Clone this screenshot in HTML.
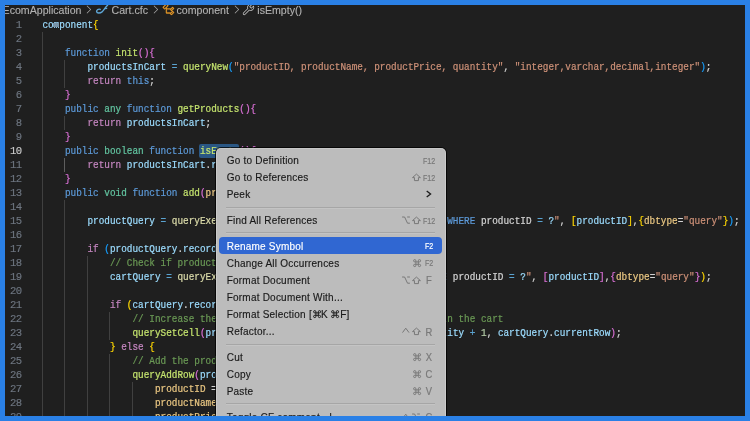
<!DOCTYPE html>
<html><head><meta charset="utf-8">
<style>
html,body{margin:0;padding:0;}
body{width:750px;height:421px;overflow:hidden;background:#2a80e6;position:relative;}
#ed{position:absolute;left:5px;top:5px;width:740px;height:411px;background:#1f1f1f;overflow:hidden;}
#code{position:absolute;left:-5px;top:-5px;width:750px;height:421px;will-change:transform;}
.ln{position:absolute;left:42.5px;height:14px;line-height:14px;white-space:pre;font-family:"Liberation Mono",monospace;font-size:9.35px;letter-spacing:0.0135px;-webkit-text-stroke:0.2px;transform:scaleY(1.12);transform-origin:0 9.6px;margin-top:1.2px;}
.num{position:absolute;left:0;width:21.4px;text-align:right;height:14px;line-height:14px;font-family:"Liberation Mono",monospace;font-size:10.6px;letter-spacing:-0.6px;margin-top:-0.4px;color:#6e7681;-webkit-text-stroke:0.15px;}
.num.act{color:#cccccc;}
.guide{position:absolute;width:1px;background:#404040;}
.guide.act{background:#5e5e5e;}
#bc{position:absolute;left:-5px;top:-5px;width:750px;height:23px;will-change:transform;font-family:"Liberation Sans",sans-serif;font-size:10.6px;color:#b2b2b2;-webkit-text-stroke:0.12px;}
#bc span{position:absolute;top:3.5px;line-height:13px;white-space:pre;}
#bc svg{position:absolute;}
#hl{position:absolute;left:199.4px;top:143.9px;width:39.3px;height:14px;background:#2a5784;border-radius:2px;}
#menu{position:absolute;left:215.7px;top:148.2px;width:230px;height:300px;background:#bcbcbc;border-radius:5px;box-shadow:0 0 0 1px rgba(0,0,0,0.75),inset 0 0 0 0.6px rgba(255,255,255,0.35);font-family:"Liberation Sans",sans-serif;font-size:10px;letter-spacing:0.22px;color:#1a1a1a;}
.mi{position:absolute;left:11px;height:14px;line-height:14px;white-space:pre;-webkit-text-stroke:0.15px;}
.sc{position:absolute;left:0;top:0;}
.sep{position:absolute;left:10.5px;width:208.5px;height:1px;background:#a6a6a6;box-shadow:0 1px 0 rgba(255,255,255,0.12);}
#sel{position:absolute;left:3.5px;width:222.6px;top:89px;height:16.8px;background:#3067d2;border-radius:4px;}
.k{position:absolute;font-size:9.3px;letter-spacing:0px;line-height:10px;height:10px;width:20px;text-align:center;color:#787878;-webkit-text-stroke:0.2px;}
</style></head><body>
<div id="ed">
<div id="code">
<div id="hl"></div>
<div class="guide" style="left:42.00px;top:32px;height:392px"></div>
<div class="guide" style="left:64.00px;top:60px;height:28px"></div>
<div class="guide" style="left:64.00px;top:116px;height:14px"></div>
<div class="guide act" style="left:64.00px;top:158px;height:14px"></div>
<div class="guide" style="left:64.00px;top:200px;height:224px"></div>
<div class="guide" style="left:87.00px;top:256px;height:168px"></div>
<div class="guide" style="left:109.00px;top:312px;height:28px"></div>
<div class="guide" style="left:109.00px;top:354px;height:70px"></div>
<div class="guide" style="left:132.00px;top:382px;height:42px"></div>
<div class="ln" style="top:18px"><span style="color:#9cdcfe">component</span><span style="color:#ffd700">{</span></div>
<div class="num" style="top:18px">1</div>
<div class="ln" style="top:32px"></div>
<div class="num" style="top:32px">2</div>
<div class="ln" style="top:46px"><span style="color:#d4d4d4">    </span><span style="color:#5d9ad9">function</span><span style="color:#d4d4d4"> </span><span style="color:#c4e36e">init</span><span style="color:#da70d6">()</span><span style="color:#da70d6">{</span></div>
<div class="num" style="top:46px">3</div>
<div class="ln" style="top:60px"><span style="color:#d4d4d4">        </span><span style="color:#9cdcfe">productsInCart</span><span style="color:#d4d4d4"> </span><span style="color:#5ba3d0">=</span><span style="color:#d4d4d4"> </span><span style="color:#c4e36e">queryNew</span><span style="color:#179fff">(</span><span style="color:#ce9178">&quot;productID, productName, productPrice, quantity&quot;</span><span style="color:#d4d4d4">, </span><span style="color:#ce9178">&quot;integer,varchar,decimal,integer&quot;</span><span style="color:#179fff">)</span><span style="color:#d4d4d4">;</span></div>
<div class="num" style="top:60px">4</div>
<div class="ln" style="top:74px"><span style="color:#d4d4d4">        </span><span style="color:#c586c0">return</span><span style="color:#d4d4d4"> </span><span style="color:#5d9ad9">this</span><span style="color:#d4d4d4">;</span></div>
<div class="num" style="top:74px">5</div>
<div class="ln" style="top:88px"><span style="color:#d4d4d4">    </span><span style="color:#da70d6">}</span></div>
<div class="num" style="top:88px">6</div>
<div class="ln" style="top:102px"><span style="color:#d4d4d4">    </span><span style="color:#5d9ad9">public</span><span style="color:#d4d4d4"> </span><span style="color:#62c4a0">any</span><span style="color:#d4d4d4"> </span><span style="color:#5d9ad9">function</span><span style="color:#d4d4d4"> </span><span style="color:#c4e36e">getProducts</span><span style="color:#da70d6">()</span><span style="color:#da70d6">{</span></div>
<div class="num" style="top:102px">7</div>
<div class="ln" style="top:116px"><span style="color:#d4d4d4">        </span><span style="color:#c586c0">return</span><span style="color:#d4d4d4"> </span><span style="color:#9cdcfe">productsInCart</span><span style="color:#d4d4d4">;</span></div>
<div class="num" style="top:116px">8</div>
<div class="ln" style="top:130px"><span style="color:#d4d4d4">    </span><span style="color:#da70d6">}</span></div>
<div class="num" style="top:130px">9</div>
<div class="ln" style="top:144px"><span style="color:#d4d4d4">    </span><span style="color:#5d9ad9">public</span><span style="color:#d4d4d4"> </span><span style="color:#62c4a0">boolean</span><span style="color:#d4d4d4"> </span><span style="color:#5d9ad9">function</span><span style="color:#d4d4d4"> </span><span style="color:#c4e36e">isEmpty</span><span style="color:#da70d6">()</span><span style="color:#da70d6">{</span></div>
<div class="num act" style="top:144px">10</div>
<div class="ln" style="top:158px"><span style="color:#d4d4d4">        </span><span style="color:#c586c0">return</span><span style="color:#d4d4d4"> </span><span style="color:#9cdcfe">productsInCart</span><span style="color:#d4d4d4">.</span><span style="color:#9cdcfe">recordCount</span><span style="color:#d4d4d4"> </span><span style="color:#5ba3d0">==</span><span style="color:#d4d4d4"> </span><span style="color:#b5cea8">0</span><span style="color:#d4d4d4">;</span></div>
<div class="num" style="top:158px">11</div>
<div class="ln" style="top:172px"><span style="color:#d4d4d4">    </span><span style="color:#da70d6">}</span></div>
<div class="num" style="top:172px">12</div>
<div class="ln" style="top:186px"><span style="color:#d4d4d4">    </span><span style="color:#5d9ad9">public</span><span style="color:#d4d4d4"> </span><span style="color:#62c4a0">void</span><span style="color:#d4d4d4"> </span><span style="color:#5d9ad9">function</span><span style="color:#d4d4d4"> </span><span style="color:#c4e36e">add</span><span style="color:#da70d6">(</span><span style="color:#ebc883">productID</span><span style="color:#da70d6">)</span><span style="color:#da70d6">{</span></div>
<div class="num" style="top:186px">13</div>
<div class="ln" style="top:200px"></div>
<div class="num" style="top:200px">14</div>
<div class="ln" style="top:214px"><span style="color:#d4d4d4">        </span><span style="color:#9cdcfe">productQuery</span><span style="color:#d4d4d4"> </span><span style="color:#5ba3d0">=</span><span style="color:#d4d4d4"> </span><span style="color:#dcdcaa">queryExecute</span><span style="color:#179fff">(</span><span style="color:#ce9178">&quot;SELECT * FROM productsTable AS pro </span><span style="color:#5d9ad9">WHERE</span><span style="color:#d4d4d4"> productID </span><span style="color:#5ba3d0">=</span><span style="color:#d4d4d4"> </span><span style="color:#9cdcfe">?</span><span style="color:#ce9178">&quot;</span><span style="color:#d4d4d4">, </span><span style="color:#ffd700">[</span><span style="color:#9cdcfe">productID</span><span style="color:#ffd700">]</span><span style="color:#d4d4d4">,</span><span style="color:#ffd700">{</span><span style="color:#ebc883">dbtype</span><span style="color:#d4d4d4">=</span><span style="color:#ce9178">&quot;query&quot;</span><span style="color:#ffd700">}</span><span style="color:#179fff">)</span><span style="color:#d4d4d4">;</span></div>
<div class="num" style="top:214px">15</div>
<div class="ln" style="top:228px"></div>
<div class="num" style="top:228px">16</div>
<div class="ln" style="top:242px"><span style="color:#d4d4d4">        </span><span style="color:#c586c0">if</span><span style="color:#d4d4d4"> </span><span style="color:#179fff">(</span><span style="color:#9cdcfe">productQuery</span><span style="color:#d4d4d4">.</span><span style="color:#9cdcfe">recordCount</span><span style="color:#179fff">)</span><span style="color:#d4d4d4"> </span><span style="color:#179fff">{</span></div>
<div class="num" style="top:242px">17</div>
<div class="ln" style="top:256px"><span style="color:#d4d4d4">            </span><span style="color:#6a9955">// Check if product already in cart</span></div>
<div class="num" style="top:256px">18</div>
<div class="ln" style="top:270px"><span style="color:#d4d4d4">            </span><span style="color:#9cdcfe">cartQuery</span><span style="color:#d4d4d4"> </span><span style="color:#5ba3d0">=</span><span style="color:#d4d4d4"> </span><span style="color:#dcdcaa">queryExecute</span><span style="color:#ffd700">(</span><span style="color:#ce9178">&quot;SELECT * FROM productsInCart </span><span style="color:#5d9ad9">WHERE</span><span style="color:#d4d4d4"> productID </span><span style="color:#5ba3d0">=</span><span style="color:#d4d4d4"> </span><span style="color:#9cdcfe">?</span><span style="color:#ce9178">&quot;</span><span style="color:#d4d4d4">, </span><span style="color:#da70d6">[</span><span style="color:#9cdcfe">productID</span><span style="color:#da70d6">]</span><span style="color:#d4d4d4">,</span><span style="color:#da70d6">{</span><span style="color:#ebc883">dbtype</span><span style="color:#d4d4d4">=</span><span style="color:#ce9178">&quot;query&quot;</span><span style="color:#da70d6">}</span><span style="color:#ffd700">)</span><span style="color:#d4d4d4">;</span></div>
<div class="num" style="top:270px">19</div>
<div class="ln" style="top:284px"></div>
<div class="num" style="top:284px">20</div>
<div class="ln" style="top:298px"><span style="color:#d4d4d4">            </span><span style="color:#c586c0">if</span><span style="color:#d4d4d4"> </span><span style="color:#ffd700">(</span><span style="color:#9cdcfe">cartQuery</span><span style="color:#d4d4d4">.</span><span style="color:#9cdcfe">recordCount</span><span style="color:#ffd700">)</span><span style="color:#d4d4d4"> </span><span style="color:#ffd700">{</span></div>
<div class="num" style="top:298px">21</div>
<div class="ln" style="top:312px"><span style="color:#d4d4d4">                </span><span style="color:#6a9955">// Increase the quantity of the product if it is found in the cart</span></div>
<div class="num" style="top:312px">22</div>
<div class="ln" style="top:326px"><span style="color:#d4d4d4">                </span><span style="color:#c4e36e">querySetCell</span><span style="color:#da70d6">(</span><span style="color:#9cdcfe">productsInCart</span><span style="color:#d4d4d4">, </span><span style="color:#ce9178">&quot;quantity&quot;</span><span style="color:#d4d4d4">, </span><span style="color:#9cdcfe">cartQuery</span><span style="color:#d4d4d4">.</span><span style="color:#9cdcfe">quantity</span><span style="color:#d4d4d4"> </span><span style="color:#5ba3d0">+</span><span style="color:#d4d4d4"> </span><span style="color:#b5cea8">1</span><span style="color:#d4d4d4">, </span><span style="color:#9cdcfe">cartQuery</span><span style="color:#d4d4d4">.</span><span style="color:#9cdcfe">currentRow</span><span style="color:#da70d6">)</span><span style="color:#d4d4d4">;</span></div>
<div class="num" style="top:326px">23</div>
<div class="ln" style="top:340px"><span style="color:#d4d4d4">            </span><span style="color:#ffd700">}</span><span style="color:#d4d4d4"> </span><span style="color:#c586c0">else</span><span style="color:#d4d4d4"> </span><span style="color:#ffd700">{</span></div>
<div class="num" style="top:340px">24</div>
<div class="ln" style="top:354px"><span style="color:#d4d4d4">                </span><span style="color:#6a9955">// Add the product to the cart</span></div>
<div class="num" style="top:354px">25</div>
<div class="ln" style="top:368px"><span style="color:#d4d4d4">                </span><span style="color:#c4e36e">queryAddRow</span><span style="color:#da70d6">(</span><span style="color:#9cdcfe">productsInCart</span><span style="color:#d4d4d4">, </span><span style="color:#179fff">{</span></div>
<div class="num" style="top:368px">26</div>
<div class="ln" style="top:382px"><span style="color:#d4d4d4">                    </span><span style="color:#ebc883">productID</span><span style="color:#d4d4d4"> = </span><span style="color:#9cdcfe">productID</span><span style="color:#d4d4d4">,</span></div>
<div class="num" style="top:382px">27</div>
<div class="ln" style="top:396px"><span style="color:#d4d4d4">                    </span><span style="color:#ebc883">productName</span><span style="color:#d4d4d4"> = </span><span style="color:#9cdcfe">productQuery</span><span style="color:#d4d4d4">.</span><span style="color:#9cdcfe">productName</span><span style="color:#d4d4d4">,</span></div>
<div class="num" style="top:396px">28</div>
<div class="ln" style="top:410px"><span style="color:#d4d4d4">                    </span><span style="color:#ebc883">productPrice</span><span style="color:#d4d4d4"> = </span><span style="color:#9cdcfe">productQuery</span><span style="color:#d4d4d4">.</span><span style="color:#9cdcfe">productPrice</span><span style="color:#d4d4d4">,</span></div>
<div class="num" style="top:410px">29</div>
<div style="position:absolute;left:53.4px;top:22.6px;width:5.6px;height:4.9px;background:#7793a8"></div>
</div>
<div id="bc">
<span style="left:2.6px">EcomApplication</span>
<svg style="left:81.8px;top:3.1px" width="13" height="13" viewBox="0 0 300 300"><path fill="#a8a8a8" d="M189 150 107 69 119 57 206 145V156L119 244L107 232Z"/></svg>
<svg style="left:94px;top:3px" width="16" height="13" viewBox="94 3 16 13"><path fill="none" stroke="#5ea6d6" stroke-width="1.4" stroke-linecap="round" d="M100.2,9.4 C98.6,8.7 96.4,9.8 96.6,11.6 C96.9,13.5 100.2,13.4 102,11.9 C103.8,10.3 105.2,7.2 107.6,5.2"/><path fill="none" stroke="#5ea6d6" stroke-width="1.2" d="M104.3,8.7 L107.2,8.4"/></svg>
<span style="left:111.5px">Cart.cfc</span>
<svg style="left:149.4px;top:3.1px" width="13" height="13" viewBox="0 0 300 300"><path fill="#a8a8a8" d="M189 150 107 69 119 57 206 145V156L119 244L107 232Z"/></svg>
<svg style="left:161.6px;top:2.8px" width="13" height="13" viewBox="0 0 300 300"><path fill="#ee9d28" stroke="#ee9d28" stroke-width="8" d="M213 182H226L276 132V119L251 94H238L204 128H110V104L145 70V56L107 19H94L19 94V107L56 145H70L91 123V232L100 241H188V251L212 276H226L276 226V212L251 187H238L203 222H109V147H188V156ZM244 114 256 125 219 163 207 151ZM244 207 256 219 219 257 207 245ZM63 125 39 100 100 39 125 63Z"/></svg>
<span style="left:176.5px">component</span>
<svg style="left:229.8px;top:3.1px" width="13" height="13" viewBox="0 0 300 300"><path fill="#a8a8a8" d="M189 150 107 69 119 57 206 145V156L119 244L107 232Z"/></svg>
<svg style="left:242px;top:2.8px" width="13" height="13" viewBox="0 0 300 300"><path fill="#c8c8c8" d="M53 281Q39 281 29.5 271.5Q20 262 19.0 249.5Q18 237 26 227Q61 189 125 127Q120 113 120.0 98.0Q120 83 126 69Q136 45 157 32Q174 21 194.5 19.0Q215 17 233 25L245 30L191 86L214 109L270 55L275 67Q281 82 281.0 98.0Q281 114 275.0 129.0Q269 144 258 155Q252 161 244 166Q228 177 209.5 179.0Q191 181 173 174Q105 243 73 273Q64 281 53 281ZM201 36Q183 36 167 47Q161 50 156 55Q142 69 138.5 88.0Q135 107 143 125L146 131L142 135Q74 201 39 238Q36 243 36.5 248.5Q37 254 40.5 257.5Q44 261 47.0 262.0Q50 263 54.0 263.0Q58 263 61 260Q91 233 164 158L169 154L174 156Q189 163 205.0 161.5Q221 160 235 151Q241 148 246 143Q255 134 259.5 122.5Q264 111 264 98Q264 92 263 86L214 134L166 86L214 37Q208 36 201 36Z"/></svg>
<span style="left:257.3px">isEmpty()</span>
</div>
</div>
<div id="menu">
<div id="sel"></div>
<div class="sep" style="top:58.60px"></div>
<div class="sep" style="top:84.25px"></div>
<div class="sep" style="top:195.40px"></div>
<div class="sep" style="top:255.25px"></div>
<div class="mi" style="top:6.00px;color:#1a1a1a">Go to Definition</div>
<div class="k" style="left:203.00px;top:7.55px;color:#787878;font-size:8.3px;transform:scaleX(0.85)">F12</div>
<div class="mi" style="top:23.10px;color:#1a1a1a">Go to References</div>
<div class="k" style="left:203.00px;top:24.65px;color:#787878;font-size:8.3px;transform:scaleX(0.85)">F12</div>
<svg style="position:absolute;left:196.50px;top:24.80px" width="10" height="9" viewBox="0 0 10 9"><path fill="none" stroke="#787878" stroke-width="1.0" d="M4.45,1.1 L8.4,4.6 H6.45 V7.6 H2.45 V4.6 H0.5 Z"/></svg>
<div class="mi" style="top:40.20px;color:#1a1a1a">Peek</div>
<svg style="position:absolute;left:210.30px;top:42.30px" width="6" height="8" viewBox="0 0 6 8"><path fill="none" stroke="#1a1a1a" stroke-width="1.3" d="M0.7,0.9 L4.6,4 L0.7,7.1"/></svg>
<div class="mi" style="top:65.85px;color:#1a1a1a">Find All References</div>
<div class="k" style="left:203.00px;top:67.40px;color:#787878;font-size:8.3px;transform:scaleX(0.85)">F12</div>
<svg style="position:absolute;left:196.50px;top:67.55px" width="10" height="9" viewBox="0 0 10 9"><path fill="none" stroke="#787878" stroke-width="1.0" d="M4.45,1.1 L8.4,4.6 H6.45 V7.6 H2.45 V4.6 H0.5 Z"/></svg>
<svg style="position:absolute;left:186.10px;top:67.75px" width="10" height="9" viewBox="0 0 10 9"><path fill="none" stroke="#787878" stroke-width="1.0" d="M0.1,1.0 H2.6 L5.5,7.2 H7.9 M5.2,1.0 H7.9"/></svg>
<div class="mi" style="top:91.50px;color:#ffffff">Rename Symbol</div>
<div class="k" style="left:203.00px;top:93.05px;color:#ffffff;font-size:8.3px;transform:scaleX(0.85)">F2</div>
<div class="mi" style="top:108.60px;color:#1a1a1a">Change All Occurrences</div>
<div class="k" style="left:203.00px;top:110.15px;color:#787878;font-size:8.3px;transform:scaleX(0.85)">F2</div>
<svg style="position:absolute;left:197.10px;top:110.75px" width="10" height="9" viewBox="0 0 10 9"><path fill="none" stroke="#787878" stroke-width="1.0" d="M2.9,2.9 H5.3 V5.3 H2.9 Z M2.9,2.9 V1.75 A1.15,1.15 0 1 0 1.75,2.9 H2.9 M5.3,2.9 V1.75 A1.15,1.15 0 1 1 6.45,2.9 H5.3 M5.3,5.3 V6.45 A1.15,1.15 0 1 0 6.45,5.3 H5.3 M2.9,5.3 V6.45 A1.15,1.15 0 1 1 1.75,5.3 H2.9"/></svg>
<div class="mi" style="top:125.70px;color:#1a1a1a">Format Document</div>
<div class="k" style="left:203.00px;top:128.15px;color:#787878;font-size:10.2px;transform:scaleX(0.92)">F</div>
<svg style="position:absolute;left:196.50px;top:127.40px" width="10" height="9" viewBox="0 0 10 9"><path fill="none" stroke="#787878" stroke-width="1.0" d="M4.45,1.1 L8.4,4.6 H6.45 V7.6 H2.45 V4.6 H0.5 Z"/></svg>
<svg style="position:absolute;left:186.10px;top:127.60px" width="10" height="9" viewBox="0 0 10 9"><path fill="none" stroke="#787878" stroke-width="1.0" d="M0.1,1.0 H2.6 L5.5,7.2 H7.9 M5.2,1.0 H7.9"/></svg>
<div class="mi" style="top:142.80px;color:#1a1a1a">Format Document With...</div>
<div class="mi" style="top:159.90px;color:#1a1a1a">Format Selection</div>
<div class="mi" style="left:93.30px;top:159.90px;color:#1a1a1a">[</div>
<div class="mi" style="left:105.30px;top:159.90px;color:#1a1a1a">K</div>
<div class="mi" style="left:124.50px;top:159.90px;color:#1a1a1a">F</div>
<div class="mi" style="left:130.90px;top:159.90px;color:#1a1a1a">]</div>
<svg style="position:absolute;left:97.50px;top:162.25px" width="10" height="9" viewBox="0 0 10 9"><path fill="none" stroke="#1a1a1a" stroke-width="1.0" d="M2.9,2.9 H5.3 V5.3 H2.9 Z M2.9,2.9 V1.75 A1.15,1.15 0 1 0 1.75,2.9 H2.9 M5.3,2.9 V1.75 A1.15,1.15 0 1 1 6.45,2.9 H5.3 M5.3,5.3 V6.45 A1.15,1.15 0 1 0 6.45,5.3 H5.3 M2.9,5.3 V6.45 A1.15,1.15 0 1 1 1.75,5.3 H2.9"/></svg>
<svg style="position:absolute;left:115.80px;top:162.25px" width="10" height="9" viewBox="0 0 10 9"><path fill="none" stroke="#1a1a1a" stroke-width="1.0" d="M2.9,2.9 H5.3 V5.3 H2.9 Z M2.9,2.9 V1.75 A1.15,1.15 0 1 0 1.75,2.9 H2.9 M5.3,2.9 V1.75 A1.15,1.15 0 1 1 6.45,2.9 H5.3 M5.3,5.3 V6.45 A1.15,1.15 0 1 0 6.45,5.3 H5.3 M2.9,5.3 V6.45 A1.15,1.15 0 1 1 1.75,5.3 H2.9"/></svg>
<div class="mi" style="top:177.00px;color:#1a1a1a">Refactor...</div>
<div class="k" style="left:203.00px;top:179.45px;color:#787878;font-size:10.2px;transform:scaleX(0.92)">R</div>
<svg style="position:absolute;left:196.50px;top:178.70px" width="10" height="9" viewBox="0 0 10 9"><path fill="none" stroke="#787878" stroke-width="1.0" d="M4.45,1.1 L8.4,4.6 H6.45 V7.6 H2.45 V4.6 H0.5 Z"/></svg>
<svg style="position:absolute;left:186.70px;top:179.10px" width="10" height="9" viewBox="0 0 10 9"><path fill="none" stroke="#787878" stroke-width="1.0" d="M0.5,5.6 L3.75,1.2 L7,5.6"/></svg>
<div class="mi" style="top:202.65px;color:#1a1a1a">Cut</div>
<div class="k" style="left:203.00px;top:205.10px;color:#787878;font-size:10.2px;transform:scaleX(0.92)">X</div>
<svg style="position:absolute;left:197.10px;top:204.80px" width="10" height="9" viewBox="0 0 10 9"><path fill="none" stroke="#787878" stroke-width="1.0" d="M2.9,2.9 H5.3 V5.3 H2.9 Z M2.9,2.9 V1.75 A1.15,1.15 0 1 0 1.75,2.9 H2.9 M5.3,2.9 V1.75 A1.15,1.15 0 1 1 6.45,2.9 H5.3 M5.3,5.3 V6.45 A1.15,1.15 0 1 0 6.45,5.3 H5.3 M2.9,5.3 V6.45 A1.15,1.15 0 1 1 1.75,5.3 H2.9"/></svg>
<div class="mi" style="top:219.75px;color:#1a1a1a">Copy</div>
<div class="k" style="left:203.00px;top:222.20px;color:#787878;font-size:10.2px;transform:scaleX(0.92)">C</div>
<svg style="position:absolute;left:197.10px;top:221.90px" width="10" height="9" viewBox="0 0 10 9"><path fill="none" stroke="#787878" stroke-width="1.0" d="M2.9,2.9 H5.3 V5.3 H2.9 Z M2.9,2.9 V1.75 A1.15,1.15 0 1 0 1.75,2.9 H2.9 M5.3,2.9 V1.75 A1.15,1.15 0 1 1 6.45,2.9 H5.3 M5.3,5.3 V6.45 A1.15,1.15 0 1 0 6.45,5.3 H5.3 M2.9,5.3 V6.45 A1.15,1.15 0 1 1 1.75,5.3 H2.9"/></svg>
<div class="mi" style="top:236.85px;color:#1a1a1a">Paste</div>
<div class="k" style="left:203.00px;top:239.30px;color:#787878;font-size:10.2px;transform:scaleX(0.92)">V</div>
<svg style="position:absolute;left:197.10px;top:239.00px" width="10" height="9" viewBox="0 0 10 9"><path fill="none" stroke="#787878" stroke-width="1.0" d="M2.9,2.9 H5.3 V5.3 H2.9 Z M2.9,2.9 V1.75 A1.15,1.15 0 1 0 1.75,2.9 H2.9 M5.3,2.9 V1.75 A1.15,1.15 0 1 1 6.45,2.9 H5.3 M5.3,5.3 V6.45 A1.15,1.15 0 1 0 6.45,5.3 H5.3 M2.9,5.3 V6.45 A1.15,1.15 0 1 1 1.75,5.3 H2.9"/></svg>
<div class="mi" style="top:262.50px;color:#1a1a1a">Toggle CF comment - l</div>
<div class="k" style="left:203.00px;top:264.95px;color:#787878;font-size:10.2px;transform:scaleX(0.92)">C</div>
<svg style="position:absolute;left:196.40px;top:264.40px" width="10" height="9" viewBox="0 0 10 9"><path fill="none" stroke="#787878" stroke-width="1.0" d="M0.1,1.0 H2.6 L5.5,7.2 H7.9 M5.2,1.0 H7.9"/></svg>
<svg style="position:absolute;left:186.70px;top:264.60px" width="10" height="9" viewBox="0 0 10 9"><path fill="none" stroke="#787878" stroke-width="1.0" d="M0.5,5.6 L3.75,1.2 L7,5.6"/></svg>
</div>
<div style="position:absolute;left:0;top:416px;width:750px;height:5px;background:#2a80e6"></div>
</body></html>
